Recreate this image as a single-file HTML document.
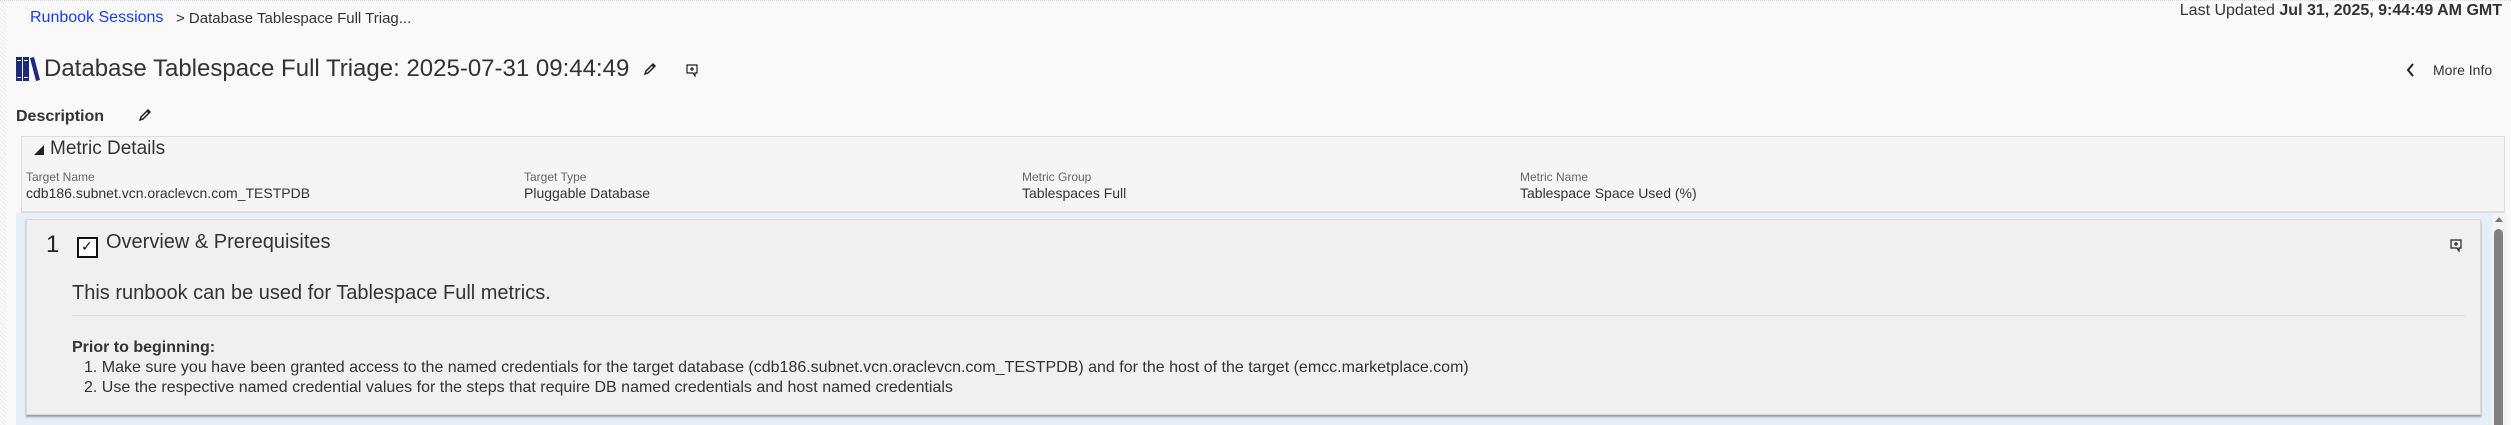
<!DOCTYPE html>
<html><head><meta charset="utf-8"><style>
*{margin:0;padding:0;box-sizing:border-box}
body{width:2511px;height:425px;overflow:hidden;background:#f9f9f9;font-family:"Liberation Sans",Arial,sans-serif;color:#333;position:relative}
.abs{position:absolute;white-space:nowrap}
.leftstrip{position:absolute;left:0;top:0;width:7px;height:425px;background:repeating-linear-gradient(45deg,#eee 0 1px,#fafafa 1px 3px)}
.topline{position:absolute;left:0;top:0;width:2511px;height:1px;border-top:1px dotted #ddd}
</style></head><body>
<div class="leftstrip"></div><div class="topline"></div>
<div class="abs" style="left:30px;top:9px;font-size:16px;color:#1a3cf0">Runbook Sessions</div>
<div class="abs" style="left:176px;top:10px;font-size:15px;color:#333">&gt; Database Tablespace Full Triag...</div>
<div class="abs" style="right:9px;top:2px;font-size:16px;color:#333">Last Updated <b>Jul 31, 2025, 9:44:49 AM GMT</b></div>

<svg class="abs" style="left:16px;top:57px" width="24" height="24" viewBox="0 0 24 24">
<rect x="0" y="0" width="6" height="24" fill="#1d2a7a"/><rect x="7" y="0" width="6" height="24" fill="#1d2a7a"/>
<path d="M14 1 L18 0 L24 23 L20 24 Z" fill="#1d2a7a"/>
<rect x="1" y="3" width="4" height="1" fill="#fff"/><rect x="1" y="20" width="4" height="1" fill="#fff"/>
<rect x="8" y="3" width="4" height="1" fill="#fff"/><rect x="8" y="20" width="4" height="1" fill="#fff"/>
</svg>
<div class="abs" style="left:44px;top:55px;font-size:24px;color:#333">Database Tablespace Full Triage: 2025-07-31 09:44:49</div>
<svg class="abs" style="left:643px;top:62px" width="14" height="14" viewBox="0 0 14 14"><path d="M2 12 L3 9 L10 2 L12 4 L5 11 Z M9 3 L11 5" fill="none" stroke="#222" stroke-width="1.5"/></svg>
<svg class="abs" style="left:686px;top:64px" width="13" height="13" viewBox="0 0 13 13"><path d="M1 1 H11 V9 H9 V12 L7 9 H1 Z" fill="none" stroke="#222" stroke-width="1.2"/><path d="M6 3 V7 M4 5 H8" stroke="#222" stroke-width="1.2"/></svg>

<svg class="abs" style="left:2406px;top:63px" width="10" height="14" viewBox="0 0 10 14"><path d="M7 1 L2 7 L7 13" fill="none" stroke="#222" stroke-width="2"/></svg>
<div class="abs" style="left:2433px;top:62px;font-size:14px;color:#333">More Info</div>

<div class="abs" style="left:16px;top:108px;font-size:16px;font-weight:bold;color:#333">Description</div>
<svg class="abs" style="left:138px;top:108px" width="14" height="14" viewBox="0 0 14 14"><path d="M2 12 L3 9 L10 2 L12 4 L5 11 Z M9 3 L11 5" fill="none" stroke="#222" stroke-width="1.5"/></svg>

<div class="abs" style="left:21px;top:136px;width:2484px;height:77px;background:#f5f5f5;border:1px solid #ddd;border-bottom:2px solid #ddd"></div>
<div class="abs" style="left:34px;top:145px;width:0;height:0;border-left:10px solid transparent;border-bottom:10px solid #222"></div>
<div class="abs" style="left:50px;top:138px;font-size:19px;color:#333">Metric Details</div>
<div class="abs" style="left:26px;top:170px;font-size:12px;color:#666">Target Name</div>
<div class="abs" style="left:26px;top:185px;font-size:14px;color:#333">cdb186.subnet.vcn.oraclevcn.com_TESTPDB</div>
<div class="abs" style="left:524px;top:170px;font-size:12px;color:#666">Target Type</div>
<div class="abs" style="left:524px;top:185px;font-size:14px;color:#333">Pluggable Database</div>
<div class="abs" style="left:1022px;top:170px;font-size:12px;color:#666">Metric Group</div>
<div class="abs" style="left:1022px;top:185px;font-size:14px;color:#333">Tablespaces Full</div>
<div class="abs" style="left:1520px;top:170px;font-size:12px;color:#666">Metric Name</div>
<div class="abs" style="left:1520px;top:185px;font-size:14px;color:#333">Tablespace Space Used (%)</div>

<div class="abs" style="left:16px;top:213px;width:2476px;height:212px;background:#e6eff7"></div>
<div class="abs" style="left:26px;top:219px;width:2455px;height:196px;background:#f0f0f0;border:1px solid #d8d8d8;box-shadow:0 2px 2px #999"></div>
<div class="abs" style="left:46px;top:231px;font-size:24px;color:#222">1</div>
<div class="abs" style="left:77px;top:237px;width:21px;height:21px;border:2px solid #111;background:#fff"></div>
<div class="abs" style="left:81px;top:238px;font-size:14px;color:#111">✓</div>
<div class="abs" style="left:106px;top:231px;font-size:20px;color:#333">Overview &amp; Prerequisites</div>
<svg class="abs" style="left:2450px;top:239px" width="13" height="13" viewBox="0 0 13 13"><path d="M1 1 H11 V9 H9 V12 L7 9 H1 Z" fill="none" stroke="#222" stroke-width="1.2"/><path d="M6 3 V7 M4 5 H8" stroke="#222" stroke-width="1.2"/></svg>
<div class="abs" style="left:72px;top:282px;font-size:20px;color:#333">This runbook can be used for Tablespace Full metrics.</div>
<div class="abs" style="left:72px;top:315px;width:2393px;height:1px;background:#dcdcdc"></div>
<div class="abs" style="left:72px;top:339px;font-size:16px;font-weight:bold;color:#333">Prior to beginning:</div>
<div class="abs" style="left:84px;top:359px;font-size:16px;color:#333">1. Make sure you have been granted access to the named credentials for the target database (cdb186.subnet.vcn.oraclevcn.com_TESTPDB) and for the host of the target (emcc.marketplace.com)</div>
<div class="abs" style="left:84px;top:379px;font-size:16px;color:#333">2. Use the respective named credential values for the steps that require DB named credentials and host named credentials</div>

<div class="abs" style="left:2492px;top:213px;width:15px;height:212px;background:#f4f4f4"></div>
<div class="abs" style="left:2495px;top:217px;width:0;height:0;border-left:4px solid transparent;border-right:4px solid transparent;border-bottom:5px solid #777"></div>
<div class="abs" style="left:2494px;top:229px;width:9px;height:196px;background:#808080;border-radius:5px 5px 0 0"></div>
</body></html>
